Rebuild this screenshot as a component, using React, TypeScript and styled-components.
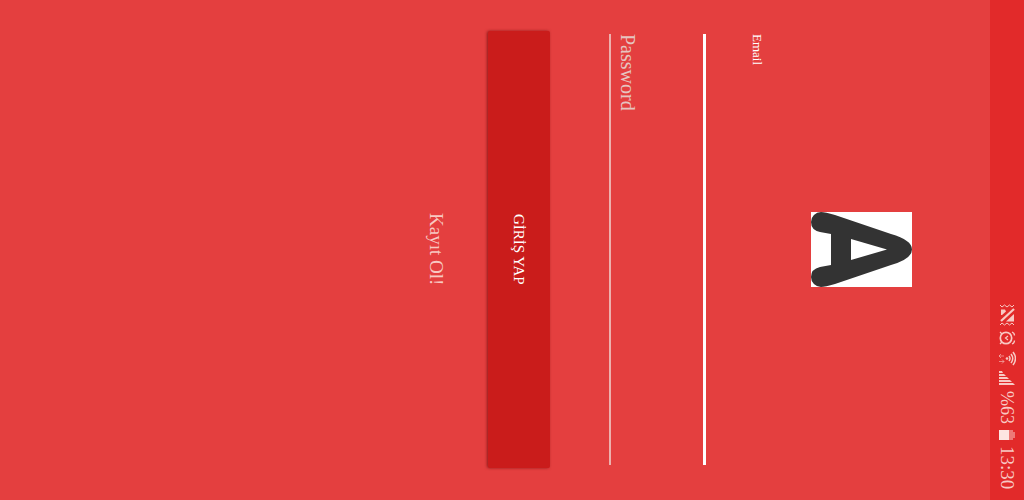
import React from "react";
import styled, { createGlobalStyle } from "styled-components";

const GlobalStyle = createGlobalStyle`
  * { box-sizing: border-box; }
  body {
    margin: 0;
    background: #e43f3f;
    font-family: "Liberation Serif", "Noto Sans", serif;
  }
`;

const Screen = styled.div`
  writing-mode: vertical-rl;
  text-orientation: sideways;
  display: flex;
  flex-direction: column;
  width: 100%;
  height: 100vh;
  background: #e43f3f;
  color: #fff;
`;

const StatusBar = styled.header`
  display: flex;
  align-items: center;
  justify-content: flex-end;
  gap: 5px;
  block-size: 34px;
  flex-shrink: 0;
  padding-inline-end: 11px;
  background: #e22a2a;
  color: #f8c9c4;
`;

const IconGroup = styled.div`
  display: flex;
  align-items: center;
  gap: 4px;
`;

const StatusText = styled.span<{ $size: number }>`
  font-size: ${(p) => p.$size}px;
  line-height: 24px;
`;

const Icon = styled.svg`
  display: block;
  flex-shrink: 0;
`;

const Main = styled.main`
  display: flex;
  flex-direction: column;
  flex: 1;
  padding-block-start: 78px;
  padding-inline: 31px 32px;
`;

const Logo = styled.svg`
  display: block;
  align-self: center;
  flex-shrink: 0;
  background: #fff;
`;

const Form = styled.form`
  display: flex;
  flex-direction: column;
  margin-block-start: 46px;
`;

const Field = styled.div`
  display: flex;
  flex-direction: column;
  margin-inline: 3px;
`;

const Label = styled.label`
  font-size: 13px;
  line-height: 16px;
`;

const Input = styled.input<{ $active?: boolean }>`
  writing-mode: vertical-rl;
  text-orientation: sideways;
  inline-size: 100%;
  block-size: ${(p) => (p.$active ? 46 : 34)}px;
  padding: 0;
  margin: 0;
  border: 0;
  border-left: ${(p) => (p.$active ? "3px solid #fff" : "2px solid #edb0ad")};
  border-radius: 0;
  outline: 0;
  background: transparent;
  color: #fff;
  font: 20px/24px "Liberation Serif", serif;
  &::placeholder { color: #e6c4c0; opacity: 1; }
`;

const PasswordField = styled(Field)`
  margin-block-start: 60px;
`;

const SubmitButton = styled.button`
  writing-mode: vertical-rl;
  text-orientation: sideways;
  block-size: 62px;
  margin: 0;
  margin-block-start: 59px;
  padding: 0;
  border: 0;
  border-radius: 2px;
  background: #ca1c1b;
  color: #fff;
  box-shadow: -1px 0 3px rgba(90, 0, 0, 0.6);
  font: 15px/20px "Liberation Serif", serif;
`;

const SignUpLink = styled.a`
  align-self: center;
  margin-block-start: 40px;
  color: #f8c9c2;
  font-size: 19px;
  line-height: 24px;
  text-decoration: none;
`;

function MuteIcon() {
  return (
    <Icon width="18" height="22" viewBox="0 0 18 22" fill="none" stroke="currentColor" aria-label="Titreşim">
      <path d="M2 1l2 2 2.500-2 2.500 2 2.500-2 2.500 2 2-2M2 21l2-2 2.500 2 2.500-2 2.500 2 2.500-2 2 2" />
      <path d="M3 5.500h4l1 2-4 3.500h-1zM8 17.500l8-7.500v7.500z" fill="currentColor" stroke="none" />
      <path d="M16 5L3 17" strokeWidth="2.200" />
    </Icon>
  );
}

function AlarmIcon() {
  return (
    <Icon width="18" height="16" viewBox="0 0 18 16" fill="none" stroke="currentColor" aria-label="Alarm">
      <circle cx="8" cy="8" r="5.700" strokeWidth="1.700" />
      <path d="M10 6L7.500 8l2.500 2" strokeWidth="1.200" />
      <path d="M14 2q2.500 1 2.500 3.500M14 14q2.500-1 2.500-3.500M4 12l-2 2M4 4L2 2" strokeWidth="1.300" />
    </Icon>
  );
}

function WifiIcon() {
  return (
    <Icon width="18" height="16" viewBox="0 0 18 16" fill="none" stroke="currentColor" aria-label="Wi-Fi">
      <path d="M11 6q2 2.500 0 5M13 4q3.500 4.500 0 9M15 2q5 6.500 0 13" strokeWidth="1.500" />
      <circle cx="9" cy="8.500" r="1.300" fill="currentColor" stroke="none" />
      <path d="M1 6h5M3 4L1 6l2 2M1 11.500h5M4 9.500l2 2-2 2" opacity=".6" />
    </Icon>
  );
}

function SignalIcon() {
  return (
    <Icon width="18" height="16" viewBox="0 0 18 16" fill="currentColor" aria-label="Sinyal">
      <path d="M1 1h3l1 2H1zM1 4h5l2 2H1zM1 7h8l2 2H1zM1 10h11l2 2H1zM1 13h14l2 2H1z" />
    </Icon>
  );
}

function BatteryIcon() {
  return (
    <Icon width="18" height="12" viewBox="0 0 18 12" fill="currentColor" aria-label="Pil">
      <path d="M11 1h4v2h2v6h-2v2h-4z" opacity=".5" />
      <path d="M1 1h10v10H1z" fill="#fde5e2" />
    </Icon>
  );
}

export default function App() {
  return (
    <>
      <GlobalStyle />
      <Screen>
        <StatusBar>
          <IconGroup>
            <MuteIcon />
            <AlarmIcon />
            <WifiIcon />
            <SignalIcon />
          </IconGroup>
          <StatusText $size={18}>%63</StatusText>
          <BatteryIcon />
          <StatusText $size={19}>13:30</StatusText>
        </StatusBar>
        <Main>
          <Logo width="101" height="75" viewBox="0 0 101 75" aria-label="A">
            <path
              fillRule="evenodd"
              fill="#333"
              d="M10 0Q14 0 24 3L80 22Q101 28 101 37.500Q101 47 80 53L24 72Q14 75 10 75A10 10 0 0 1 0 65Q0 57 9 55L20 53V22L9 20Q0 18 0 10A10 10 0 0 1 10 0ZM40 27V48L76 37.500Z"
            />
          </Logo>
          <Form onSubmit={(e) => e.preventDefault()}>
            <Field>
              <Label htmlFor="email">Email</Label>
              <Input id="email" type="email" $active />
            </Field>
            <PasswordField>
              <Input id="password" type="password" placeholder="Password" aria-label="Password" />
            </PasswordField>
            <SubmitButton type="submit">GİRİŞ YAP</SubmitButton>
          </Form>
          <SignUpLink href="#kayit">Kayıt Ol!</SignUpLink>
        </Main>
      </Screen>
    </>
  );
}
